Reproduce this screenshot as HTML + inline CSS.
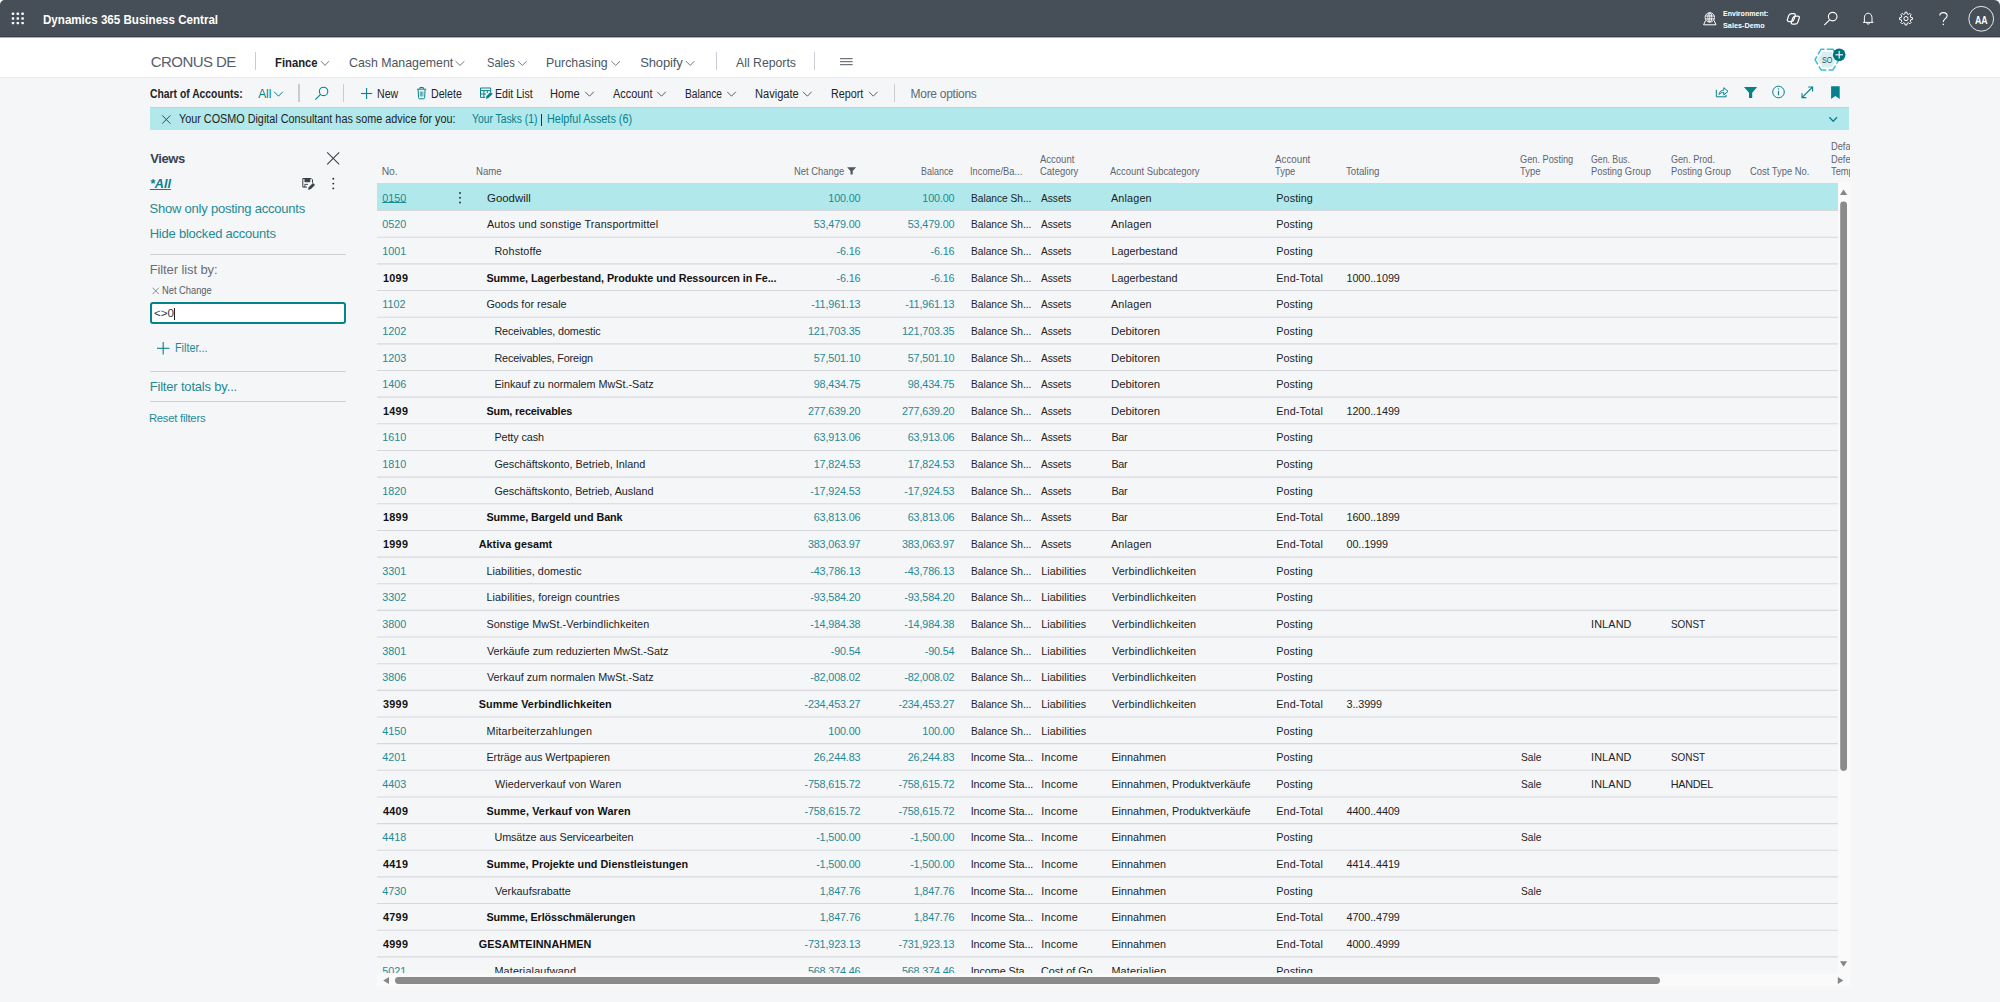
<!DOCTYPE html>
<html><head><meta charset="utf-8"><title>Chart of Accounts</title>
<style>
html,body{margin:0;padding:0;}
body{width:2000px;height:1002px;overflow:hidden;background:#f5f6f8;font-family:"Liberation Sans", sans-serif;position:relative;color:#212326;}
.t{position:absolute;white-space:pre;line-height:20px;height:20px;}
svg{overflow:visible;}
</style></head><body>
<div style="position:absolute;left:0px;top:0px;width:2000px;height:40px;background:#fff;"></div>
<div style="position:absolute;left:0px;top:0px;width:2000px;height:37.2px;background:#464e57;border-radius:5px 6px 0 0;box-shadow:0 0.3px 1px rgba(0,0,0,.35);"></div>
<div style="position:absolute;left:0px;top:35.9px;width:2000px;height:1.3px;background:#363f48;"></div>
<div style="position:absolute;left:0px;top:37.8px;width:2000px;height:39.2px;background:#fff;"></div>
<div style="position:absolute;left:0px;top:76.9px;width:2000px;height:1px;background:#ebecec;"></div>
<div style="position:absolute;left:150px;top:107.4px;width:1699.4px;height:0.9px;background:#c9ced2;"></div>
<div style="position:absolute;left:150px;top:108px;width:1699.4px;height:21.8px;background:#b0e8eb;"></div>
<svg style="position:absolute;left:0px;top:0px;" width="1" height="1" viewBox="0 0 1 1"><rect x="11.75" y="12.600000000000001" width="2.5" height="2.4" rx="0.7" fill="#fff"/><rect x="11.75" y="17.25" width="2.5" height="2.4" rx="0.7" fill="#fff"/><rect x="11.75" y="21.900000000000002" width="2.5" height="2.4" rx="0.7" fill="#fff"/><rect x="16.55" y="12.600000000000001" width="2.5" height="2.4" rx="0.7" fill="#fff"/><rect x="16.55" y="17.25" width="2.5" height="2.4" rx="0.7" fill="#fff"/><rect x="16.55" y="21.900000000000002" width="2.5" height="2.4" rx="0.7" fill="#fff"/><rect x="21.35" y="12.600000000000001" width="2.5" height="2.4" rx="0.7" fill="#fff"/><rect x="21.35" y="17.25" width="2.5" height="2.4" rx="0.7" fill="#fff"/><rect x="21.35" y="21.900000000000002" width="2.5" height="2.4" rx="0.7" fill="#fff"/></svg>
<svg style="position:absolute;left:0px;top:0px;" width="1" height="1" viewBox="0 0 1 1"><g fill="none" stroke="#fff" stroke-width="0.9"><circle cx="1709.8" cy="17.4" r="4.7"/><ellipse cx="1709.8" cy="17.4" rx="2" ry="4.7"/><path d="M1705.2 16h9.2M1705.2 18.9h9.2M1709.8 12.7v9.4"/><path d="M1705.6 20.4 L1703.6 24.8 H1716 L1714 20.4" stroke-width="1"/></g></svg>
<svg style="position:absolute;left:0px;top:0px;" width="1" height="1" viewBox="0 0 1 1"><g fill="none" stroke="#fff" stroke-width="1.25"><path d="M1788.64 15.60Q1789.30 13.50 1791.50 13.50L1793.60 13.50Q1795.80 13.50 1795.14 15.60L1793.96 19.40Q1793.30 21.50 1791.10 21.50L1789.00 21.50Q1786.80 21.50 1787.46 19.40Z"/><path d="M1792.70 18.19Q1793.40 16.10 1795.60 16.10L1797.70 16.10Q1799.90 16.10 1799.20 18.19L1797.90 22.11Q1797.20 24.20 1795.00 24.20L1792.90 24.20Q1790.70 24.20 1791.40 22.11Z"/></g></svg>
<svg style="position:absolute;left:0px;top:0px;" width="1" height="1" viewBox="0 0 1 1"><g fill="none" stroke="#fff" stroke-width="1.15"><circle cx="1832.7" cy="16.6" r="4.3"/><path d="M1829.6 19.8L1824.300 25.100"/></g></svg>
<svg style="position:absolute;left:0px;top:0px;" width="1" height="1" viewBox="0 0 1 1"><g fill="none" stroke="#fff" stroke-width="1"><path d="M1863 22.400h10.400M1864.400 22.400v-4.600c0-2.800 1.700-4.600 3.800-4.600s3.800 1.800 3.800 4.600v4.600"/><path d="M1866.900 22.900c0 .8.600 1.300 1.300 1.300s1.300-.5 1.300-1.300"/></g></svg>
<svg style="position:absolute;left:0px;top:0px;" width="1" height="1" viewBox="0 0 1 1"><g fill="none" stroke="#fff" stroke-width="1" stroke-linejoin="round"><polygon points="1910.77,17.50 1912.43,17.64 1912.43,19.56 1910.77,19.70 1910.16,21.20 1911.23,22.47 1909.87,23.83 1908.60,22.76 1907.10,23.37 1906.96,25.03 1905.04,25.03 1904.90,23.37 1903.40,22.76 1902.13,23.83 1900.77,22.47 1901.84,21.20 1901.23,19.70 1899.57,19.56 1899.57,17.64 1901.23,17.50 1901.84,16.00 1900.77,14.73 1902.13,13.37 1903.40,14.44 1904.90,13.83 1905.04,12.17 1906.96,12.17 1907.10,13.83 1908.60,14.44 1909.87,13.37 1911.23,14.73 1910.16,16.00"/><circle cx="1906.0" cy="18.6" r="2.1"/></g></svg>
<svg style="position:absolute;left:0px;top:0px;" width="1" height="1" viewBox="0 0 1 1"><g fill="none" stroke="#fff" stroke-width="1.1"><path d="M1939.800 15.600c0-1.900 1.600-3 3.600-3s3.700 1.200 3.700 3.100c0 1.700-1.100 2.500-2.300 3.400-1 .8-1.500 1.500-1.500 3"/></g><rect x="1942.700" y="23.700" width="1.300" height="1.400" fill="#fff"/></svg>
<svg style="position:absolute;left:0px;top:0px;" width="1" height="1" viewBox="0 0 1 1"><circle cx="1981.2" cy="18.8" r="12.4" fill="none" stroke="#e8eaec" stroke-width="1"/></svg>
<div style="position:absolute;left:254.8px;top:52px;width:1.2px;height:17.599999999999994px;background:#c9ccd3;"></div>
<svg style="position:absolute;left:0px;top:0px;" width="1" height="1" viewBox="0 0 1 1"><polyline points="321,61.2 325.0,65.4 329,61.2" fill="none" stroke="#6f7882" stroke-width="1.0"/></svg>
<svg style="position:absolute;left:0px;top:0px;" width="1" height="1" viewBox="0 0 1 1"><polyline points="455.6,61.2 460.0,65.4 464.4,61.2" fill="none" stroke="#6f7882" stroke-width="1.0"/></svg>
<svg style="position:absolute;left:0px;top:0px;" width="1" height="1" viewBox="0 0 1 1"><polyline points="518,61.2 522.3,65.4 526.6,61.2" fill="none" stroke="#6f7882" stroke-width="1.0"/></svg>
<svg style="position:absolute;left:0px;top:0px;" width="1" height="1" viewBox="0 0 1 1"><polyline points="611.4,61.2 615.7,65.4 620,61.2" fill="none" stroke="#6f7882" stroke-width="1.0"/></svg>
<svg style="position:absolute;left:0px;top:0px;" width="1" height="1" viewBox="0 0 1 1"><polyline points="686,61.2 690.2,65.4 694.4,61.2" fill="none" stroke="#6f7882" stroke-width="1.0"/></svg>
<div style="position:absolute;left:715.8px;top:52px;width:1.2px;height:17.599999999999994px;background:#c9ccd3;"></div>
<div style="position:absolute;left:813.8px;top:52px;width:1.2px;height:17.599999999999994px;background:#c9ccd3;"></div>
<svg style="position:absolute;left:0px;top:0px;" width="1" height="1" viewBox="0 0 1 1"><line x1="840" y1="58.7" x2="852.6" y2="58.7" stroke="#4c5660" stroke-width="1" stroke-linecap="butt"/><line x1="840" y1="61.7" x2="852.6" y2="61.7" stroke="#4c5660" stroke-width="1" stroke-linecap="butt"/><line x1="840" y1="64.7" x2="852.6" y2="64.7" stroke="#4c5660" stroke-width="1" stroke-linecap="butt"/></svg>
<svg style="position:absolute;left:0px;top:0px;" width="1" height="1" viewBox="0 0 1 1"><polygon points="1835.10,59.60 1831.05,66.61 1822.95,66.61 1818.90,59.60 1822.95,52.59 1831.05,52.59" fill="#d8eef1" stroke="#d8eef1" stroke-width="1.6" stroke-linejoin="round"/><polygon points="1839.00,59.60 1833.00,69.99 1821.00,69.99 1815.00,59.60 1821.00,49.21 1833.00,49.21" fill="none" stroke="#38c0ce" stroke-width="1.5" stroke-dasharray="8.3 3.4" stroke-dashoffset="4.15" stroke-linejoin="round" stroke-linecap="round"/><circle cx="1839.2" cy="54.8" r="6.3" fill="#00727c"/><line x1="1835.5" y1="54.8" x2="1842.9" y2="54.8" stroke="#fff" stroke-width="1.1" stroke-linecap="butt"/><line x1="1839.2" y1="51.1" x2="1839.2" y2="58.5" stroke="#fff" stroke-width="1.1" stroke-linecap="butt"/></svg>
<svg style="position:absolute;left:0px;top:0px;" width="1" height="1" viewBox="0 0 1 1"><polyline points="274.2,91.8 278.5,96.2 282.8,91.8" fill="none" stroke="#06828c" stroke-width="1.0"/></svg>
<div style="position:absolute;left:298.4px;top:84.4px;width:1.2px;height:17.19999999999999px;background:#c9ccd3;"></div>
<svg style="position:absolute;left:0px;top:0px;" width="1" height="1" viewBox="0 0 1 1"><g fill="none" stroke="#06828c" stroke-width="1.1"><circle cx="323.6" cy="91.400" r="4.200"/><path d="M320.600 94.400L315.300 99.700"/></g></svg>
<div style="position:absolute;left:343.0px;top:84.4px;width:1.2px;height:17.19999999999999px;background:#c9ccd3;"></div>
<svg style="position:absolute;left:0px;top:0px;" width="1" height="1" viewBox="0 0 1 1"><line x1="361" y1="93.5" x2="372.2" y2="93.5" stroke="#06828c" stroke-width="1.1" stroke-linecap="butt"/><line x1="366.6" y1="87.9" x2="366.6" y2="99.1" stroke="#06828c" stroke-width="1.1" stroke-linecap="butt"/></svg>
<svg style="position:absolute;left:0px;top:0px;" width="1" height="1" viewBox="0 0 1 1"><g fill="none" stroke="#06828c" stroke-width="1"><path d="M417 89.200h9.200M419.900 89v-1.500h3.400v1.500M418.100 89.400l.5 8.300c0 .7.400 1.100 1.100 1.100h3.800c.7 0 1.100-.4 1.100-1.100l.5-8.300"/><path d="M420.300 91.500v5M421.600 91.500v5M422.900 91.500v5" stroke-width="0.7"/></g></svg>
<svg style="position:absolute;left:0px;top:0px;" width="1" height="1" viewBox="0 0 1 1"><g fill="none" stroke="#06828c" stroke-width="1"><path d="M480.500 88h10.200v2.600h-10.200zM480.500 90.600v6.800h4.600M483.900 90.600v6.800M487.300 90.600v2.500M480.500 94h5.500M490.700 90.600v1.500"/><path d="M486.200 98.400l.6-2.400 3.800-3.800 1.700 1.700-3.800 3.800z" fill="#06828c" stroke-width="0.6"/></g></svg>
<svg style="position:absolute;left:0px;top:0px;" width="1" height="1" viewBox="0 0 1 1"><polyline points="585.2,91.8 589.5,96.2 593.8,91.8" fill="none" stroke="#5a636d" stroke-width="1.0"/></svg>
<svg style="position:absolute;left:0px;top:0px;" width="1" height="1" viewBox="0 0 1 1"><polyline points="657.2,91.8 661.5,96.2 665.8,91.8" fill="none" stroke="#5a636d" stroke-width="1.0"/></svg>
<svg style="position:absolute;left:0px;top:0px;" width="1" height="1" viewBox="0 0 1 1"><polyline points="727.2,91.8 731.5,96.2 735.8,91.8" fill="none" stroke="#5a636d" stroke-width="1.0"/></svg>
<svg style="position:absolute;left:0px;top:0px;" width="1" height="1" viewBox="0 0 1 1"><polyline points="803,91.8 807.3,96.2 811.6,91.8" fill="none" stroke="#5a636d" stroke-width="1.0"/></svg>
<svg style="position:absolute;left:0px;top:0px;" width="1" height="1" viewBox="0 0 1 1"><polyline points="869,91.8 873.3,96.2 877.6,91.8" fill="none" stroke="#5a636d" stroke-width="1.0"/></svg>
<div style="position:absolute;left:894.3px;top:84.4px;width:1.2px;height:17.19999999999999px;background:#c9ccd3;"></div>
<svg style="position:absolute;left:0px;top:0px;" width="1" height="1" viewBox="0 0 1 1"><g fill="none" stroke="#06828c" stroke-width="1"><path d="M1716.300 89.800v7h9.800v-2"/><path d="M1719 94.600c.3-2.600 2-4.300 4.800-4.500v-2.400l4.200 3.600-4.200 3.600v-2.500c-2.100 0-3.600.6-4.800 2.200z"/></g></svg>
<svg style="position:absolute;left:0px;top:0px;" width="1" height="1" viewBox="0 0 1 1"><path d="M1744 86.900h13.200l-5 5.900v5.200h-3.200v-5.200z" fill="#06828c"/></svg>
<svg style="position:absolute;left:0px;top:0px;" width="1" height="1" viewBox="0 0 1 1"><circle cx="1778.500" cy="92" r="5.800" fill="none" stroke="#06828c" stroke-width="1"/><line x1="1778.5" y1="90.8" x2="1778.5" y2="95.2" stroke="#06828c" stroke-width="1.1" stroke-linecap="butt"/><circle cx="1778.500" cy="88.900" r="0.700" fill="#06828c"/></svg>
<svg style="position:absolute;left:0px;top:0px;" width="1" height="1" viewBox="0 0 1 1"><g fill="none" stroke="#06828c" stroke-width="1.1"><path d="M1802 97.600L1812.600 87M1808.200 87h4.400v4.400M1802 93.200v4.400h4.400"/></g></svg>
<svg style="position:absolute;left:0px;top:0px;" width="1" height="1" viewBox="0 0 1 1"><path d="M1831.100 86.200h8.600v12.900l-4.300-3-4.300 3z" fill="#06828c"/></svg>
<svg style="position:absolute;left:0px;top:0px;" width="1" height="1" viewBox="0 0 1 1"><line x1="162.2" y1="115.4" x2="170.4" y2="123.6" stroke="#3b4450" stroke-width="1" stroke-linecap="butt"/><line x1="170.4" y1="115.4" x2="162.2" y2="123.6" stroke="#3b4450" stroke-width="1" stroke-linecap="butt"/></svg>
<div style="position:absolute;left:540.6px;top:114.2px;width:1.1px;height:11.6px;background:#2a2e33;"></div>
<svg style="position:absolute;left:0px;top:0px;" width="1" height="1" viewBox="0 0 1 1"><polyline points="1829.4,117.2 1833.2,121.3 1837,117.2" fill="none" stroke="#06828c" stroke-width="1.3"/></svg>
<svg style="position:absolute;left:0px;top:0px;" width="1" height="1" viewBox="0 0 1 1"><line x1="327.2" y1="152.4" x2="339.2" y2="164.4" stroke="#39424e" stroke-width="1.1" stroke-linecap="butt"/><line x1="339.2" y1="152.4" x2="327.2" y2="164.4" stroke="#39424e" stroke-width="1.1" stroke-linecap="butt"/></svg>
<svg style="position:absolute;left:0px;top:0px;" width="1" height="1" viewBox="0 0 1 1"><g fill="none" stroke="#3a3f45" stroke-width="1"><path d="M302.800 178.500h8.400l1.300 1.300v3M302.800 178.500v8.600h4.200"/><path d="M304.800 178.700v3.200h5.200v-3.200" fill="#3a3f45" stroke-width="0.6"/><path d="M304.800 187v-2.600h3.200" stroke-width="0.9"/><path d="M308.400 189.500l.6-2.300 4-4 1.700 1.700-4 4z" fill="#3a3f45" stroke-width="0.5"/></g></svg>
<svg style="position:absolute;left:0px;top:0px;" width="1" height="1" viewBox="0 0 1 1"><circle cx="333.3" cy="178.8" r="0.95" fill="#2a2e33"/><circle cx="333.3" cy="183.6" r="0.95" fill="#2a2e33"/><circle cx="333.3" cy="188.4" r="0.95" fill="#2a2e33"/></svg>
<div style="position:absolute;left:150px;top:253.6px;width:196px;height:1px;background:#cdd0d3;"></div>
<svg style="position:absolute;left:0px;top:0px;" width="1" height="1" viewBox="0 0 1 1"><line x1="152.5" y1="287.7" x2="158.9" y2="294.1" stroke="#6a737c" stroke-width="0.8" stroke-linecap="butt"/><line x1="158.9" y1="287.7" x2="152.5" y2="294.1" stroke="#6a737c" stroke-width="0.8" stroke-linecap="butt"/></svg>
<div style="position:absolute;left:150px;top:302px;width:196px;height:22.4px;box-sizing:border-box;border:2px solid #06828c;border-radius:3px;background:#fff"></div>
<div style="position:absolute;left:174.2px;top:308.2px;width:1px;height:11.6px;background:#222;"></div>
<svg style="position:absolute;left:0px;top:0px;" width="1" height="1" viewBox="0 0 1 1"><line x1="157" y1="348.3" x2="169.4" y2="348.3" stroke="#06828c" stroke-width="1.1" stroke-linecap="butt"/><line x1="163.2" y1="342.1" x2="163.2" y2="354.5" stroke="#06828c" stroke-width="1.1" stroke-linecap="butt"/></svg>
<div style="position:absolute;left:150px;top:371.2px;width:196px;height:1px;background:#cdd0d3;"></div>
<div style="position:absolute;left:150px;top:401.4px;width:196px;height:1px;background:#cdd0d3;"></div>
<svg style="position:absolute;left:0px;top:0px;" width="1" height="1" viewBox="0 0 1 1"><path d="M847.100 167.200h9l-3.400 3.800v3.600h-2.200v-3.600z" fill="#50575f"/></svg>
<svg style="position:absolute;left:0px;top:0px;" width="1" height="1" viewBox="0 0 1 1"><rect x="377" y="183.45" width="1461" height="26.9" fill="#b0e8eb"/></svg>
<svg style="position:absolute;left:0px;top:0px;" width="1" height="1" viewBox="0 0 1 1"><line x1="377" x2="1838" y1="183.50" y2="183.50" stroke="#d6d8dc" stroke-width="1.1"/><line x1="377" x2="1838" y1="210.55" y2="210.55" stroke="#d6d8dc" stroke-width="1.1"/><line x1="377" x2="1838" y1="237.25" y2="237.25" stroke="#d6d8dc" stroke-width="1.1"/><line x1="377" x2="1838" y1="263.91" y2="263.91" stroke="#d6d8dc" stroke-width="1.1"/><line x1="377" x2="1838" y1="290.56" y2="290.56" stroke="#d6d8dc" stroke-width="1.1"/><line x1="377" x2="1838" y1="317.21" y2="317.21" stroke="#d6d8dc" stroke-width="1.1"/><line x1="377" x2="1838" y1="343.86" y2="343.86" stroke="#d6d8dc" stroke-width="1.1"/><line x1="377" x2="1838" y1="370.51" y2="370.51" stroke="#d6d8dc" stroke-width="1.1"/><line x1="377" x2="1838" y1="397.17" y2="397.17" stroke="#d6d8dc" stroke-width="1.1"/><line x1="377" x2="1838" y1="423.82" y2="423.82" stroke="#d6d8dc" stroke-width="1.1"/><line x1="377" x2="1838" y1="450.47" y2="450.47" stroke="#d6d8dc" stroke-width="1.1"/><line x1="377" x2="1838" y1="477.12" y2="477.12" stroke="#d6d8dc" stroke-width="1.1"/><line x1="377" x2="1838" y1="503.77" y2="503.77" stroke="#d6d8dc" stroke-width="1.1"/><line x1="377" x2="1838" y1="530.43" y2="530.43" stroke="#d6d8dc" stroke-width="1.1"/><line x1="377" x2="1838" y1="557.08" y2="557.08" stroke="#d6d8dc" stroke-width="1.1"/><line x1="377" x2="1838" y1="583.73" y2="583.73" stroke="#d6d8dc" stroke-width="1.1"/><line x1="377" x2="1838" y1="610.38" y2="610.38" stroke="#d6d8dc" stroke-width="1.1"/><line x1="377" x2="1838" y1="637.03" y2="637.03" stroke="#d6d8dc" stroke-width="1.1"/><line x1="377" x2="1838" y1="663.69" y2="663.69" stroke="#d6d8dc" stroke-width="1.1"/><line x1="377" x2="1838" y1="690.34" y2="690.34" stroke="#d6d8dc" stroke-width="1.1"/><line x1="377" x2="1838" y1="716.99" y2="716.99" stroke="#d6d8dc" stroke-width="1.1"/><line x1="377" x2="1838" y1="743.64" y2="743.64" stroke="#d6d8dc" stroke-width="1.1"/><line x1="377" x2="1838" y1="770.29" y2="770.29" stroke="#d6d8dc" stroke-width="1.1"/><line x1="377" x2="1838" y1="796.95" y2="796.95" stroke="#d6d8dc" stroke-width="1.1"/><line x1="377" x2="1838" y1="823.60" y2="823.60" stroke="#d6d8dc" stroke-width="1.1"/><line x1="377" x2="1838" y1="850.25" y2="850.25" stroke="#d6d8dc" stroke-width="1.1"/><line x1="377" x2="1838" y1="876.90" y2="876.90" stroke="#d6d8dc" stroke-width="1.1"/><line x1="377" x2="1838" y1="903.55" y2="903.55" stroke="#d6d8dc" stroke-width="1.1"/><line x1="377" x2="1838" y1="930.21" y2="930.21" stroke="#d6d8dc" stroke-width="1.1"/><line x1="377" x2="1838" y1="956.86" y2="956.86" stroke="#d6d8dc" stroke-width="1.1"/></svg>
<svg style="position:absolute;left:0px;top:0px;" width="1" height="1" viewBox="0 0 1 1"><circle cx="460" cy="193.0" r="0.95" fill="#2a2e33"/><circle cx="460" cy="197.7" r="0.95" fill="#2a2e33"/><circle cx="460" cy="202.5" r="0.95" fill="#2a2e33"/></svg>
<span class="t" style="top:10px;font-size:13.4px;font-weight:700;color:#fff;transform:translateY(-0.45px) scaleX(0.8648);transform-origin:0 50%;left:42.86px;">Dynamics 365 Business Central</span>
<span class="t" style="top:4px;font-size:8.0px;font-weight:700;color:#fff;transform:translateY(0px) scaleX(0.8801);transform-origin:0 50%;left:1722.86px;">Environment:</span>
<span class="t" style="top:16px;font-size:8.0px;font-weight:700;color:#fff;transform:translateY(0px) scaleX(0.9102);transform-origin:0 50%;left:1722.86px;">Sales-Demo</span>
<span class="t" style="top:11px;font-size:10px;font-weight:700;color:#fff;transform:translateY(0px) scaleX(0.8766);transform-origin:0 50%;left:1974.75px;">AA</span>
<span class="t" style="top:52px;font-size:15px;color:#55606b;letter-spacing:-0.543px;left:150.68px;">CRONUS DE</span>
<span class="t" style="top:53px;font-size:13px;font-weight:700;transform:translateY(0px) scaleX(0.8669);transform-origin:0 50%;left:274.79px;">Finance</span>
<span class="t" style="top:53px;font-size:13px;color:#4c5660;transform:translateY(0px) scaleX(0.9491);transform-origin:0 50%;left:348.79px;">Cash Management</span>
<span class="t" style="top:53px;font-size:13px;color:#4c5660;transform:translateY(0px) scaleX(0.8553);transform-origin:0 50%;left:486.79px;">Sales</span>
<span class="t" style="top:53px;font-size:13px;color:#4c5660;transform:translateY(0px) scaleX(0.9468);transform-origin:0 50%;left:546.47px;">Purchasing</span>
<span class="t" style="top:53px;font-size:13px;color:#4c5660;letter-spacing:-0.155px;left:640.28px;">Shopify</span>
<span class="t" style="top:53px;font-size:13px;color:#4c5660;transform:translateY(0px) scaleX(0.9434);transform-origin:0 50%;left:735.88px;">All Reports</span>
<span class="t" style="top:50px;font-size:8.6px;color:#27525d;transform:translateY(0px) scaleX(0.8409);transform-origin:0 50%;left:1822.03px;">SO</span>
<span class="t" style="top:84px;font-size:12px;font-weight:700;transform:translateY(0px) scaleX(0.8620);transform-origin:0 50%;left:149.54px;">Chart of Accounts:</span>
<span class="t" style="top:84px;font-size:12px;color:#06828c;letter-spacing:-0.109px;left:258.19px;">All</span>
<span class="t" style="top:84px;font-size:12px;transform:translateY(0px) scaleX(0.8827);transform-origin:0 50%;left:376.54px;">New</span>
<span class="t" style="top:84px;font-size:12px;transform:translateY(0px) scaleX(0.8880);transform-origin:0 50%;left:431.14px;">Delete</span>
<span class="t" style="top:84px;font-size:12px;transform:translateY(0px) scaleX(0.8824);transform-origin:0 50%;left:495.14px;">Edit List</span>
<span class="t" style="top:84px;font-size:12px;transform:translateY(0px) scaleX(0.9262);transform-origin:0 50%;left:550.14px;">Home</span>
<span class="t" style="top:84px;font-size:12px;transform:translateY(0px) scaleX(0.9091);transform-origin:0 50%;left:613.12px;">Account</span>
<span class="t" style="top:84px;font-size:12px;transform:translateY(0px) scaleX(0.8531);transform-origin:0 50%;left:685.14px;">Balance</span>
<span class="t" style="top:84px;font-size:12px;transform:translateY(0px) scaleX(0.9224);transform-origin:0 50%;left:755.14px;">Navigate</span>
<span class="t" style="top:84px;font-size:12px;transform:translateY(0px) scaleX(0.8975);transform-origin:0 50%;left:831.14px;">Report</span>
<span class="t" style="top:84px;font-size:12px;color:#5f6974;letter-spacing:-0.278px;left:910.54px;">More options</span>
<span class="t" style="top:109px;font-size:12px;transform:translateY(0px) scaleX(0.9006);transform-origin:0 50%;left:178.54px;">Your COSMO Digital Consultant has some advice for you:</span>
<span class="t" style="top:109px;font-size:12px;color:#06828c;transform:translateY(0px) scaleX(0.8597);transform-origin:0 50%;left:471.54px;">Your Tasks (1)</span>
<span class="t" style="top:109px;font-size:12px;color:#06828c;transform:translateY(0px) scaleX(0.9049);transform-origin:0 50%;left:547.40px;">Helpful Assets (6)</span>
<span class="t" style="top:149px;font-size:13px;font-weight:700;color:#39424e;letter-spacing:-0.442px;left:150.37px;">Views</span>
<span class="t" style="top:174px;font-size:12.6px;font-weight:700;color:#06828c;font-style:italic;letter-spacing:0.009px;left:149.91px;text-decoration:underline;text-decoration-thickness:1.2px;text-underline-offset:1.3px;text-decoration-skip-ink:none;">*All</span>
<span class="t" style="top:199px;font-size:13px;color:#1f8a94;letter-spacing:-0.217px;left:149.48px;">Show only posting accounts</span>
<span class="t" style="top:224px;font-size:13px;color:#1f8a94;letter-spacing:-0.224px;left:149.69px;">Hide blocked accounts</span>
<span class="t" style="top:260px;font-size:13px;color:#66707a;letter-spacing:-0.105px;left:149.69px;">Filter list by:</span>
<span class="t" style="top:281px;font-size:10.2px;color:#555e67;transform:translateY(0px) scaleX(0.9136);transform-origin:0 50%;left:162.34px;">Net Change</span>
<span class="t" style="top:303px;font-size:11.6px;color:#33383d;letter-spacing:-0.05px;left:154.06px;">&lt;&gt;0</span>
<span class="t" style="top:338px;font-size:12px;color:#1f8a94;transform:translateY(0px) scaleX(0.9025);transform-origin:0 50%;left:175.38px;">Filter...</span>
<span class="t" style="top:377px;font-size:13px;color:#1f8a94;letter-spacing:-0.183px;left:149.69px;">Filter totals by...</span>
<span class="t" style="top:408px;font-size:11.3px;color:#1f8a94;letter-spacing:-0.248px;left:148.89px;">Reset filters</span>
<span class="t" style="top:162px;font-size:10.3px;color:#5c6670;letter-spacing:-0.028px;left:381.63px;">No.</span>
<span class="t" style="top:162px;font-size:10.3px;color:#5c6670;transform:translateY(0px) scaleX(0.9313);transform-origin:0 50%;left:475.63px;">Name</span>
<span class="t" style="top:162px;font-size:10.3px;color:#5c6670;transform:translateY(0px) scaleX(0.9120);transform-origin:0 50%;left:794.03px;">Net Change</span>
<span class="t" style="top:162px;font-size:10.3px;color:#5c6670;transform:translateY(0px) scaleX(0.8687);transform-origin:0 50%;left:920.63px;">Balance</span>
<span class="t" style="top:162px;font-size:10.3px;color:#5c6670;transform:translateY(0px) scaleX(0.9038);transform-origin:0 50%;left:969.63px;">Income/Ba...</span>
<span class="t" style="top:150px;font-size:10.3px;color:#5c6670;transform:translateY(0px) scaleX(0.9228);transform-origin:0 50%;left:1040.03px;">Account</span>
<span class="t" style="top:162px;font-size:10.3px;color:#5c6670;transform:translateY(0px) scaleX(0.9175);transform-origin:0 50%;left:1040.23px;">Category</span>
<span class="t" style="top:162px;font-size:10.3px;color:#5c6670;transform:translateY(0px) scaleX(0.9144);transform-origin:0 50%;left:1110.23px;">Account Subcategory</span>
<span class="t" style="top:150px;font-size:10.3px;color:#5c6670;transform:translateY(0px) scaleX(0.9493);transform-origin:0 50%;left:1275.23px;">Account</span>
<span class="t" style="top:162px;font-size:10.3px;color:#5c6670;transform:translateY(0px) scaleX(0.9113);transform-origin:0 50%;left:1275.03px;">Type</span>
<span class="t" style="top:162px;font-size:10.3px;color:#5c6670;transform:translateY(0px) scaleX(0.9418);transform-origin:0 50%;left:1345.93px;">Totaling</span>
<span class="t" style="top:150px;font-size:10.3px;color:#5c6670;transform:translateY(0px) scaleX(0.8942);transform-origin:0 50%;left:1519.63px;">Gen. Posting</span>
<span class="t" style="top:162px;font-size:10.3px;color:#5c6670;transform:translateY(0px) scaleX(0.9241);transform-origin:0 50%;left:1520.01px;">Type</span>
<span class="t" style="top:150px;font-size:10.3px;color:#5c6670;transform:translateY(0px) scaleX(0.8483);transform-origin:0 50%;left:1590.63px;">Gen. Bus.</span>
<span class="t" style="top:162px;font-size:10.3px;color:#5c6670;transform:translateY(0px) scaleX(0.9104);transform-origin:0 50%;left:1590.63px;">Posting Group</span>
<span class="t" style="top:150px;font-size:10.3px;color:#5c6670;transform:translateY(0px) scaleX(0.8823);transform-origin:0 50%;left:1670.63px;">Gen. Prod.</span>
<span class="t" style="top:162px;font-size:10.3px;color:#5c6670;transform:translateY(0px) scaleX(0.9104);transform-origin:0 50%;left:1670.63px;">Posting Group</span>
<span class="t" style="top:162px;font-size:10.3px;color:#5c6670;transform:translateY(0px) scaleX(0.9119);transform-origin:0 50%;left:1750.23px;">Cost Type No.</span>
<span class="t" style="top:137px;font-size:10.3px;color:#5c6670;left:1830.83px;transform:scaleX(0.9);transform-origin:0 50%;width:20.9px;overflow:hidden;">Default</span>
<span class="t" style="top:150px;font-size:10.3px;color:#5c6670;left:1830.83px;transform:scaleX(0.9);transform-origin:0 50%;width:20.9px;overflow:hidden;">Deferral</span>
<span class="t" style="top:162px;font-size:10.3px;color:#5c6670;left:1830.83px;transform:scaleX(0.9);transform-origin:0 50%;width:20.9px;overflow:hidden;">Template</span>
<span class="t" style="top:188px;font-size:10.8px;color:#1f8a94;letter-spacing:0.0px;left:382.21px;text-decoration:underline;text-decoration-thickness:0.9px;text-underline-offset:0.4px;text-decoration-skip-ink:none;">0150</span>
<span class="t" style="top:188px;font-size:10.8px;transform:translateY(0px) scaleX(1.0575);transform-origin:0 50%;left:487.03px;">Goodwill</span>
<span class="t" style="top:188px;font-size:10.8px;color:#1f8a94;left:828.31px;letter-spacing:-0.16px;">100.00</span>
<span class="t" style="top:188px;font-size:10.8px;color:#1f8a94;left:922.31px;letter-spacing:-0.16px;">100.00</span>
<span class="t" style="top:188px;font-size:10.8px;transform:translateY(0px) scaleX(0.9401);transform-origin:0 50%;left:970.71px;">Balance Sh...</span>
<span class="t" style="top:188px;font-size:10.8px;transform:translateY(0px) scaleX(0.9376);transform-origin:0 50%;left:1040.92px;">Assets</span>
<span class="t" style="top:188px;font-size:10.8px;letter-spacing:0.161px;left:1111.01px;">Anlagen</span>
<span class="t" style="top:188px;font-size:10.8px;letter-spacing:0.109px;left:1276.21px;">Posting</span>
<span class="t" style="top:214px;font-size:10.8px;color:#1f8a94;letter-spacing:0.0px;left:382.21px;">0520</span>
<span class="t" style="top:214px;font-size:10.8px;letter-spacing:0.150px;left:486.96px;">Autos und sonstige Transportmittel</span>
<span class="t" style="top:214px;font-size:10.8px;color:#1f8a94;left:813.77px;letter-spacing:-0.16px;">53,479.00</span>
<span class="t" style="top:214px;font-size:10.8px;color:#1f8a94;left:907.77px;letter-spacing:-0.16px;">53,479.00</span>
<span class="t" style="top:214px;font-size:10.8px;transform:translateY(0px) scaleX(0.9401);transform-origin:0 50%;left:970.71px;">Balance Sh...</span>
<span class="t" style="top:214px;font-size:10.8px;transform:translateY(0px) scaleX(0.9373);transform-origin:0 50%;left:1040.90px;">Assets</span>
<span class="t" style="top:214px;font-size:10.8px;letter-spacing:0.161px;left:1111.01px;">Anlagen</span>
<span class="t" style="top:214px;font-size:10.8px;letter-spacing:0.093px;left:1276.21px;">Posting</span>
<span class="t" style="top:241px;font-size:10.8px;color:#1f8a94;letter-spacing:0.0px;left:382.21px;">1001</span>
<span class="t" style="top:241px;font-size:10.8px;letter-spacing:0.145px;left:494.41px;">Rohstoffe</span>
<span class="t" style="top:241px;font-size:10.8px;color:#1f8a94;left:836.57px;letter-spacing:-0.16px;">-6.16</span>
<span class="t" style="top:241px;font-size:10.8px;color:#1f8a94;left:930.57px;letter-spacing:-0.16px;">-6.16</span>
<span class="t" style="top:241px;font-size:10.8px;transform:translateY(0px) scaleX(0.9401);transform-origin:0 50%;left:970.71px;">Balance Sh...</span>
<span class="t" style="top:241px;font-size:10.8px;transform:translateY(0px) scaleX(0.9373);transform-origin:0 50%;left:1040.90px;">Assets</span>
<span class="t" style="top:241px;font-size:10.8px;letter-spacing:-0.005px;left:1111.41px;">Lagerbestand</span>
<span class="t" style="top:241px;font-size:10.8px;letter-spacing:0.093px;left:1276.21px;">Posting</span>
<span class="t" style="top:268px;font-size:10.8px;font-weight:700;color:#111;letter-spacing:0.33px;left:382.91px;">1099</span>
<span class="t" style="top:268px;font-size:10.8px;font-weight:700;color:#111;letter-spacing:-0.062px;left:486.41px;">Summe, Lagerbestand, Produkte und Ressourcen in Fe...</span>
<span class="t" style="top:268px;font-size:10.8px;color:#1f8a94;left:836.57px;letter-spacing:-0.16px;">-6.16</span>
<span class="t" style="top:268px;font-size:10.8px;color:#1f8a94;left:930.57px;letter-spacing:-0.16px;">-6.16</span>
<span class="t" style="top:268px;font-size:10.8px;transform:translateY(0px) scaleX(0.9401);transform-origin:0 50%;left:970.71px;">Balance Sh...</span>
<span class="t" style="top:268px;font-size:10.8px;transform:translateY(0px) scaleX(0.9373);transform-origin:0 50%;left:1040.90px;">Assets</span>
<span class="t" style="top:268px;font-size:10.8px;letter-spacing:-0.005px;left:1111.41px;">Lagerbestand</span>
<span class="t" style="top:268px;font-size:10.8px;letter-spacing:0.131px;left:1276.21px;">End-Total</span>
<span class="t" style="top:268px;font-size:10.8px;letter-spacing:-0.08px;left:1346.51px;">1000..1099</span>
<span class="t" style="top:294px;font-size:10.8px;color:#1f8a94;letter-spacing:0.0px;left:382.21px;">1102</span>
<span class="t" style="top:294px;font-size:10.8px;letter-spacing:0.024px;left:486.41px;">Goods for resale</span>
<span class="t" style="top:294px;font-size:10.8px;color:#1f8a94;left:811.15px;letter-spacing:-0.16px;">-11,961.13</span>
<span class="t" style="top:294px;font-size:10.8px;color:#1f8a94;left:905.15px;letter-spacing:-0.16px;">-11,961.13</span>
<span class="t" style="top:294px;font-size:10.8px;transform:translateY(0px) scaleX(0.9401);transform-origin:0 50%;left:970.71px;">Balance Sh...</span>
<span class="t" style="top:294px;font-size:10.8px;transform:translateY(0px) scaleX(0.9373);transform-origin:0 50%;left:1040.90px;">Assets</span>
<span class="t" style="top:294px;font-size:10.8px;letter-spacing:0.161px;left:1111.01px;">Anlagen</span>
<span class="t" style="top:294px;font-size:10.8px;letter-spacing:0.093px;left:1276.21px;">Posting</span>
<span class="t" style="top:321px;font-size:10.8px;color:#1f8a94;letter-spacing:0.0px;left:382.21px;">1202</span>
<span class="t" style="top:321px;font-size:10.8px;letter-spacing:-0.092px;left:494.41px;">Receivables, domestic</span>
<span class="t" style="top:321px;font-size:10.8px;color:#1f8a94;left:807.93px;letter-spacing:-0.16px;">121,703.35</span>
<span class="t" style="top:321px;font-size:10.8px;color:#1f8a94;left:901.93px;letter-spacing:-0.16px;">121,703.35</span>
<span class="t" style="top:321px;font-size:10.8px;transform:translateY(0px) scaleX(0.9401);transform-origin:0 50%;left:970.71px;">Balance Sh...</span>
<span class="t" style="top:321px;font-size:10.8px;transform:translateY(0px) scaleX(0.9373);transform-origin:0 50%;left:1040.90px;">Assets</span>
<span class="t" style="top:321px;font-size:10.8px;transform:translateY(0px) scaleX(1.0504);transform-origin:0 50%;left:1111.41px;">Debitoren</span>
<span class="t" style="top:321px;font-size:10.8px;letter-spacing:0.093px;left:1276.21px;">Posting</span>
<span class="t" style="top:348px;font-size:10.8px;color:#1f8a94;letter-spacing:0.0px;left:382.21px;">1203</span>
<span class="t" style="top:348px;font-size:10.8px;letter-spacing:-0.149px;left:494.41px;">Receivables, Foreign</span>
<span class="t" style="top:348px;font-size:10.8px;color:#1f8a94;left:813.77px;letter-spacing:-0.16px;">57,501.10</span>
<span class="t" style="top:348px;font-size:10.8px;color:#1f8a94;left:907.77px;letter-spacing:-0.16px;">57,501.10</span>
<span class="t" style="top:348px;font-size:10.8px;transform:translateY(0px) scaleX(0.9401);transform-origin:0 50%;left:970.71px;">Balance Sh...</span>
<span class="t" style="top:348px;font-size:10.8px;transform:translateY(0px) scaleX(0.9373);transform-origin:0 50%;left:1040.90px;">Assets</span>
<span class="t" style="top:348px;font-size:10.8px;transform:translateY(0px) scaleX(1.0504);transform-origin:0 50%;left:1111.41px;">Debitoren</span>
<span class="t" style="top:348px;font-size:10.8px;letter-spacing:0.093px;left:1276.21px;">Posting</span>
<span class="t" style="top:374px;font-size:10.8px;color:#1f8a94;letter-spacing:0.0px;left:382.21px;">1406</span>
<span class="t" style="top:374px;font-size:10.8px;letter-spacing:-0.015px;left:494.41px;">Einkauf zu normalem MwSt.-Satz</span>
<span class="t" style="top:374px;font-size:10.8px;color:#1f8a94;left:813.77px;letter-spacing:-0.16px;">98,434.75</span>
<span class="t" style="top:374px;font-size:10.8px;color:#1f8a94;left:907.77px;letter-spacing:-0.16px;">98,434.75</span>
<span class="t" style="top:374px;font-size:10.8px;transform:translateY(0px) scaleX(0.9401);transform-origin:0 50%;left:970.71px;">Balance Sh...</span>
<span class="t" style="top:374px;font-size:10.8px;transform:translateY(0px) scaleX(0.9373);transform-origin:0 50%;left:1040.90px;">Assets</span>
<span class="t" style="top:374px;font-size:10.8px;transform:translateY(0px) scaleX(1.0504);transform-origin:0 50%;left:1111.41px;">Debitoren</span>
<span class="t" style="top:374px;font-size:10.8px;letter-spacing:0.093px;left:1276.21px;">Posting</span>
<span class="t" style="top:401px;font-size:10.8px;font-weight:700;color:#111;letter-spacing:0.33px;left:382.91px;">1499</span>
<span class="t" style="top:401px;font-size:10.8px;font-weight:700;color:#111;letter-spacing:-0.158px;left:486.41px;">Sum, receivables</span>
<span class="t" style="top:401px;font-size:10.8px;color:#1f8a94;left:807.93px;letter-spacing:-0.16px;">277,639.20</span>
<span class="t" style="top:401px;font-size:10.8px;color:#1f8a94;left:901.93px;letter-spacing:-0.16px;">277,639.20</span>
<span class="t" style="top:401px;font-size:10.8px;transform:translateY(0px) scaleX(0.9401);transform-origin:0 50%;left:970.71px;">Balance Sh...</span>
<span class="t" style="top:401px;font-size:10.8px;transform:translateY(0px) scaleX(0.9373);transform-origin:0 50%;left:1040.90px;">Assets</span>
<span class="t" style="top:401px;font-size:10.8px;transform:translateY(0px) scaleX(1.0504);transform-origin:0 50%;left:1111.41px;">Debitoren</span>
<span class="t" style="top:401px;font-size:10.8px;letter-spacing:0.131px;left:1276.21px;">End-Total</span>
<span class="t" style="top:401px;font-size:10.8px;letter-spacing:-0.08px;left:1346.51px;">1200..1499</span>
<span class="t" style="top:427px;font-size:10.8px;color:#1f8a94;letter-spacing:0.0px;left:382.21px;">1610</span>
<span class="t" style="top:427px;font-size:10.8px;letter-spacing:-0.093px;left:494.41px;">Petty cash</span>
<span class="t" style="top:427px;font-size:10.8px;color:#1f8a94;left:813.77px;letter-spacing:-0.16px;">63,913.06</span>
<span class="t" style="top:427px;font-size:10.8px;color:#1f8a94;left:907.77px;letter-spacing:-0.16px;">63,913.06</span>
<span class="t" style="top:427px;font-size:10.8px;transform:translateY(0px) scaleX(0.9401);transform-origin:0 50%;left:970.71px;">Balance Sh...</span>
<span class="t" style="top:427px;font-size:10.8px;transform:translateY(0px) scaleX(0.9373);transform-origin:0 50%;left:1040.90px;">Assets</span>
<span class="t" style="top:427px;font-size:10.8px;letter-spacing:-0.268px;left:1111.41px;">Bar</span>
<span class="t" style="top:427px;font-size:10.8px;letter-spacing:0.093px;left:1276.21px;">Posting</span>
<span class="t" style="top:454px;font-size:10.8px;color:#1f8a94;letter-spacing:0.0px;left:382.21px;">1810</span>
<span class="t" style="top:454px;font-size:10.8px;letter-spacing:0.004px;left:494.41px;">Geschäftskonto, Betrieb, Inland</span>
<span class="t" style="top:454px;font-size:10.8px;color:#1f8a94;left:813.77px;letter-spacing:-0.16px;">17,824.53</span>
<span class="t" style="top:454px;font-size:10.8px;color:#1f8a94;left:907.77px;letter-spacing:-0.16px;">17,824.53</span>
<span class="t" style="top:454px;font-size:10.8px;transform:translateY(0px) scaleX(0.9401);transform-origin:0 50%;left:970.71px;">Balance Sh...</span>
<span class="t" style="top:454px;font-size:10.8px;transform:translateY(0px) scaleX(0.9373);transform-origin:0 50%;left:1040.90px;">Assets</span>
<span class="t" style="top:454px;font-size:10.8px;letter-spacing:-0.268px;left:1111.41px;">Bar</span>
<span class="t" style="top:454px;font-size:10.8px;letter-spacing:0.093px;left:1276.21px;">Posting</span>
<span class="t" style="top:481px;font-size:10.8px;color:#1f8a94;letter-spacing:0.0px;left:382.21px;">1820</span>
<span class="t" style="top:481px;font-size:10.8px;letter-spacing:-0.015px;left:494.41px;">Geschäftskonto, Betrieb, Ausland</span>
<span class="t" style="top:481px;font-size:10.8px;color:#1f8a94;left:810.34px;letter-spacing:-0.16px;">-17,924.53</span>
<span class="t" style="top:481px;font-size:10.8px;color:#1f8a94;left:904.34px;letter-spacing:-0.16px;">-17,924.53</span>
<span class="t" style="top:481px;font-size:10.8px;transform:translateY(0px) scaleX(0.9401);transform-origin:0 50%;left:970.71px;">Balance Sh...</span>
<span class="t" style="top:481px;font-size:10.8px;transform:translateY(0px) scaleX(0.9373);transform-origin:0 50%;left:1040.90px;">Assets</span>
<span class="t" style="top:481px;font-size:10.8px;letter-spacing:-0.268px;left:1111.41px;">Bar</span>
<span class="t" style="top:481px;font-size:10.8px;letter-spacing:0.093px;left:1276.21px;">Posting</span>
<span class="t" style="top:507px;font-size:10.8px;font-weight:700;color:#111;letter-spacing:0.33px;left:382.91px;">1899</span>
<span class="t" style="top:507px;font-size:10.8px;font-weight:700;color:#111;letter-spacing:-0.053px;left:486.41px;">Summe, Bargeld und Bank</span>
<span class="t" style="top:507px;font-size:10.8px;color:#1f8a94;left:813.77px;letter-spacing:-0.16px;">63,813.06</span>
<span class="t" style="top:507px;font-size:10.8px;color:#1f8a94;left:907.77px;letter-spacing:-0.16px;">63,813.06</span>
<span class="t" style="top:507px;font-size:10.8px;transform:translateY(0px) scaleX(0.9401);transform-origin:0 50%;left:970.71px;">Balance Sh...</span>
<span class="t" style="top:507px;font-size:10.8px;transform:translateY(0px) scaleX(0.9373);transform-origin:0 50%;left:1040.90px;">Assets</span>
<span class="t" style="top:507px;font-size:10.8px;letter-spacing:-0.268px;left:1111.41px;">Bar</span>
<span class="t" style="top:507px;font-size:10.8px;letter-spacing:0.131px;left:1276.21px;">End-Total</span>
<span class="t" style="top:507px;font-size:10.8px;letter-spacing:-0.08px;left:1346.51px;">1600..1899</span>
<span class="t" style="top:534px;font-size:10.8px;font-weight:700;color:#111;letter-spacing:0.33px;left:382.91px;">1999</span>
<span class="t" style="top:534px;font-size:10.8px;font-weight:700;color:#111;letter-spacing:0.013px;left:478.81px;">Aktiva gesamt</span>
<span class="t" style="top:534px;font-size:10.8px;color:#1f8a94;left:807.93px;letter-spacing:-0.16px;">383,063.97</span>
<span class="t" style="top:534px;font-size:10.8px;color:#1f8a94;left:901.93px;letter-spacing:-0.16px;">383,063.97</span>
<span class="t" style="top:534px;font-size:10.8px;transform:translateY(0px) scaleX(0.9401);transform-origin:0 50%;left:970.71px;">Balance Sh...</span>
<span class="t" style="top:534px;font-size:10.8px;transform:translateY(0px) scaleX(0.9373);transform-origin:0 50%;left:1040.90px;">Assets</span>
<span class="t" style="top:534px;font-size:10.8px;letter-spacing:0.161px;left:1111.01px;">Anlagen</span>
<span class="t" style="top:534px;font-size:10.8px;letter-spacing:0.131px;left:1276.21px;">End-Total</span>
<span class="t" style="top:534px;font-size:10.8px;letter-spacing:-0.08px;left:1346.51px;">00..1999</span>
<span class="t" style="top:561px;font-size:10.8px;color:#1f8a94;letter-spacing:0.0px;left:382.21px;">3301</span>
<span class="t" style="top:561px;font-size:10.8px;letter-spacing:0.078px;left:486.41px;">Liabilities, domestic</span>
<span class="t" style="top:561px;font-size:10.8px;color:#1f8a94;left:810.34px;letter-spacing:-0.16px;">-43,786.13</span>
<span class="t" style="top:561px;font-size:10.8px;color:#1f8a94;left:904.34px;letter-spacing:-0.16px;">-43,786.13</span>
<span class="t" style="top:561px;font-size:10.8px;transform:translateY(0px) scaleX(0.9401);transform-origin:0 50%;left:970.71px;">Balance Sh...</span>
<span class="t" style="top:561px;font-size:10.8px;letter-spacing:0.047px;left:1041.21px;">Liabilities</span>
<span class="t" style="top:561px;font-size:10.8px;letter-spacing:0.159px;left:1111.95px;">Verbindlichkeiten</span>
<span class="t" style="top:561px;font-size:10.8px;letter-spacing:0.093px;left:1276.21px;">Posting</span>
<span class="t" style="top:587px;font-size:10.8px;color:#1f8a94;letter-spacing:0.0px;left:382.21px;">3302</span>
<span class="t" style="top:587px;font-size:10.8px;letter-spacing:0.102px;left:486.41px;">Liabilities, foreign countries</span>
<span class="t" style="top:587px;font-size:10.8px;color:#1f8a94;left:810.34px;letter-spacing:-0.16px;">-93,584.20</span>
<span class="t" style="top:587px;font-size:10.8px;color:#1f8a94;left:904.34px;letter-spacing:-0.16px;">-93,584.20</span>
<span class="t" style="top:587px;font-size:10.8px;transform:translateY(0px) scaleX(0.9401);transform-origin:0 50%;left:970.71px;">Balance Sh...</span>
<span class="t" style="top:587px;font-size:10.8px;letter-spacing:0.047px;left:1041.21px;">Liabilities</span>
<span class="t" style="top:587px;font-size:10.8px;letter-spacing:0.159px;left:1111.95px;">Verbindlichkeiten</span>
<span class="t" style="top:587px;font-size:10.8px;letter-spacing:0.093px;left:1276.21px;">Posting</span>
<span class="t" style="top:614px;font-size:10.8px;color:#1f8a94;letter-spacing:0.0px;left:382.21px;">3800</span>
<span class="t" style="top:614px;font-size:10.8px;letter-spacing:0.082px;left:486.41px;">Sonstige MwSt.-Verbindlichkeiten</span>
<span class="t" style="top:614px;font-size:10.8px;color:#1f8a94;left:810.34px;letter-spacing:-0.16px;">-14,984.38</span>
<span class="t" style="top:614px;font-size:10.8px;color:#1f8a94;left:904.34px;letter-spacing:-0.16px;">-14,984.38</span>
<span class="t" style="top:614px;font-size:10.8px;transform:translateY(0px) scaleX(0.9401);transform-origin:0 50%;left:970.71px;">Balance Sh...</span>
<span class="t" style="top:614px;font-size:10.8px;letter-spacing:0.047px;left:1041.21px;">Liabilities</span>
<span class="t" style="top:614px;font-size:10.8px;letter-spacing:0.159px;left:1111.95px;">Verbindlichkeiten</span>
<span class="t" style="top:614px;font-size:10.8px;letter-spacing:0.093px;left:1276.21px;">Posting</span>
<span class="t" style="top:614px;font-size:10.8px;letter-spacing:0.157px;left:1591.01px;">INLAND</span>
<span class="t" style="top:614px;font-size:10.8px;transform:translateY(0px) scaleX(0.9171);transform-origin:0 50%;left:1670.81px;">SONST</span>
<span class="t" style="top:641px;font-size:10.8px;color:#1f8a94;letter-spacing:0.0px;left:382.21px;">3801</span>
<span class="t" style="top:641px;font-size:10.8px;letter-spacing:0.010px;left:486.95px;">Verkäufe zum reduzierten MwSt.-Satz</span>
<span class="t" style="top:641px;font-size:10.8px;color:#1f8a94;left:830.71px;letter-spacing:-0.16px;">-90.54</span>
<span class="t" style="top:641px;font-size:10.8px;color:#1f8a94;left:924.71px;letter-spacing:-0.16px;">-90.54</span>
<span class="t" style="top:641px;font-size:10.8px;transform:translateY(0px) scaleX(0.9401);transform-origin:0 50%;left:970.71px;">Balance Sh...</span>
<span class="t" style="top:641px;font-size:10.8px;letter-spacing:0.047px;left:1041.21px;">Liabilities</span>
<span class="t" style="top:641px;font-size:10.8px;letter-spacing:0.159px;left:1111.95px;">Verbindlichkeiten</span>
<span class="t" style="top:641px;font-size:10.8px;letter-spacing:0.093px;left:1276.21px;">Posting</span>
<span class="t" style="top:667px;font-size:10.8px;color:#1f8a94;letter-spacing:0.0px;left:382.21px;">3806</span>
<span class="t" style="top:667px;font-size:10.8px;letter-spacing:0.019px;left:486.95px;">Verkauf zum normalen MwSt.-Satz</span>
<span class="t" style="top:667px;font-size:10.8px;color:#1f8a94;left:810.34px;letter-spacing:-0.16px;">-82,008.02</span>
<span class="t" style="top:667px;font-size:10.8px;color:#1f8a94;left:904.34px;letter-spacing:-0.16px;">-82,008.02</span>
<span class="t" style="top:667px;font-size:10.8px;transform:translateY(0px) scaleX(0.9401);transform-origin:0 50%;left:970.71px;">Balance Sh...</span>
<span class="t" style="top:667px;font-size:10.8px;letter-spacing:0.047px;left:1041.21px;">Liabilities</span>
<span class="t" style="top:667px;font-size:10.8px;letter-spacing:0.159px;left:1111.95px;">Verbindlichkeiten</span>
<span class="t" style="top:667px;font-size:10.8px;letter-spacing:0.093px;left:1276.21px;">Posting</span>
<span class="t" style="top:694px;font-size:10.8px;font-weight:700;color:#111;letter-spacing:0.33px;left:382.91px;">3999</span>
<span class="t" style="top:694px;font-size:10.8px;font-weight:700;color:#111;letter-spacing:0.063px;left:478.81px;">Summe Verbindlichkeiten</span>
<span class="t" style="top:694px;font-size:10.8px;color:#1f8a94;left:804.50px;letter-spacing:-0.16px;">-234,453.27</span>
<span class="t" style="top:694px;font-size:10.8px;color:#1f8a94;left:898.50px;letter-spacing:-0.16px;">-234,453.27</span>
<span class="t" style="top:694px;font-size:10.8px;transform:translateY(0px) scaleX(0.9401);transform-origin:0 50%;left:970.71px;">Balance Sh...</span>
<span class="t" style="top:694px;font-size:10.8px;letter-spacing:0.047px;left:1041.21px;">Liabilities</span>
<span class="t" style="top:694px;font-size:10.8px;letter-spacing:0.159px;left:1111.95px;">Verbindlichkeiten</span>
<span class="t" style="top:694px;font-size:10.8px;letter-spacing:0.131px;left:1276.21px;">End-Total</span>
<span class="t" style="top:694px;font-size:10.8px;letter-spacing:-0.08px;left:1346.51px;">3..3999</span>
<span class="t" style="top:721px;font-size:10.8px;color:#1f8a94;letter-spacing:0.0px;left:382.21px;">4150</span>
<span class="t" style="top:721px;font-size:10.8px;letter-spacing:0.255px;left:486.41px;">Mitarbeiterzahlungen</span>
<span class="t" style="top:721px;font-size:10.8px;color:#1f8a94;left:828.31px;letter-spacing:-0.16px;">100.00</span>
<span class="t" style="top:721px;font-size:10.8px;color:#1f8a94;left:922.31px;letter-spacing:-0.16px;">100.00</span>
<span class="t" style="top:721px;font-size:10.8px;transform:translateY(0px) scaleX(0.9401);transform-origin:0 50%;left:970.71px;">Balance Sh...</span>
<span class="t" style="top:721px;font-size:10.8px;letter-spacing:0.047px;left:1041.21px;">Liabilities</span>
<span class="t" style="top:721px;font-size:10.8px;letter-spacing:0.093px;left:1276.21px;">Posting</span>
<span class="t" style="top:747px;font-size:10.8px;color:#1f8a94;letter-spacing:0.0px;left:382.21px;">4201</span>
<span class="t" style="top:747px;font-size:10.8px;letter-spacing:0.007px;left:486.41px;">Erträge aus Wertpapieren</span>
<span class="t" style="top:747px;font-size:10.8px;color:#1f8a94;left:813.77px;letter-spacing:-0.16px;">26,244.83</span>
<span class="t" style="top:747px;font-size:10.8px;color:#1f8a94;left:907.77px;letter-spacing:-0.16px;">26,244.83</span>
<span class="t" style="top:747px;font-size:10.8px;letter-spacing:-0.081px;left:970.71px;">Income Sta...</span>
<span class="t" style="top:747px;font-size:10.8px;letter-spacing:0.240px;left:1041.21px;">Income</span>
<span class="t" style="top:747px;font-size:10.8px;letter-spacing:0.008px;left:1111.41px;">Einnahmen</span>
<span class="t" style="top:747px;font-size:10.8px;letter-spacing:0.093px;left:1276.21px;">Posting</span>
<span class="t" style="top:747px;font-size:10.8px;transform:translateY(0px) scaleX(0.9430);transform-origin:0 50%;left:1520.97px;">Sale</span>
<span class="t" style="top:747px;font-size:10.8px;letter-spacing:0.157px;left:1591.01px;">INLAND</span>
<span class="t" style="top:747px;font-size:10.8px;transform:translateY(0px) scaleX(0.9171);transform-origin:0 50%;left:1670.81px;">SONST</span>
<span class="t" style="top:774px;font-size:10.8px;color:#1f8a94;letter-spacing:0.0px;left:382.21px;">4403</span>
<span class="t" style="top:774px;font-size:10.8px;letter-spacing:0.080px;left:494.97px;">Wiederverkauf von Waren</span>
<span class="t" style="top:774px;font-size:10.8px;color:#1f8a94;left:804.50px;letter-spacing:-0.16px;">-758,615.72</span>
<span class="t" style="top:774px;font-size:10.8px;color:#1f8a94;left:898.50px;letter-spacing:-0.16px;">-758,615.72</span>
<span class="t" style="top:774px;font-size:10.8px;letter-spacing:-0.081px;left:970.71px;">Income Sta...</span>
<span class="t" style="top:774px;font-size:10.8px;letter-spacing:0.240px;left:1041.21px;">Income</span>
<span class="t" style="top:774px;font-size:10.8px;letter-spacing:-0.002px;left:1111.41px;">Einnahmen, Produktverkäufe</span>
<span class="t" style="top:774px;font-size:10.8px;letter-spacing:0.093px;left:1276.21px;">Posting</span>
<span class="t" style="top:774px;font-size:10.8px;transform:translateY(0px) scaleX(0.9430);transform-origin:0 50%;left:1520.97px;">Sale</span>
<span class="t" style="top:774px;font-size:10.8px;letter-spacing:0.157px;left:1591.01px;">INLAND</span>
<span class="t" style="top:774px;font-size:10.8px;letter-spacing:-0.265px;left:1670.81px;">HANDEL</span>
<span class="t" style="top:801px;font-size:10.8px;font-weight:700;color:#111;letter-spacing:0.33px;left:382.91px;">4409</span>
<span class="t" style="top:801px;font-size:10.8px;font-weight:700;color:#111;letter-spacing:0.103px;left:486.41px;">Summe, Verkauf von Waren</span>
<span class="t" style="top:801px;font-size:10.8px;color:#1f8a94;left:804.50px;letter-spacing:-0.16px;">-758,615.72</span>
<span class="t" style="top:801px;font-size:10.8px;color:#1f8a94;left:898.50px;letter-spacing:-0.16px;">-758,615.72</span>
<span class="t" style="top:801px;font-size:10.8px;letter-spacing:-0.081px;left:970.71px;">Income Sta...</span>
<span class="t" style="top:801px;font-size:10.8px;letter-spacing:0.240px;left:1041.21px;">Income</span>
<span class="t" style="top:801px;font-size:10.8px;letter-spacing:-0.002px;left:1111.41px;">Einnahmen, Produktverkäufe</span>
<span class="t" style="top:801px;font-size:10.8px;letter-spacing:0.131px;left:1276.21px;">End-Total</span>
<span class="t" style="top:801px;font-size:10.8px;letter-spacing:-0.08px;left:1346.51px;">4400..4409</span>
<span class="t" style="top:827px;font-size:10.8px;color:#1f8a94;letter-spacing:0.0px;left:382.21px;">4418</span>
<span class="t" style="top:827px;font-size:10.8px;letter-spacing:-0.075px;left:494.41px;">Umsätze aus Servicearbeiten</span>
<span class="t" style="top:827px;font-size:10.8px;color:#1f8a94;left:816.19px;letter-spacing:-0.16px;">-1,500.00</span>
<span class="t" style="top:827px;font-size:10.8px;color:#1f8a94;left:910.19px;letter-spacing:-0.16px;">-1,500.00</span>
<span class="t" style="top:827px;font-size:10.8px;letter-spacing:-0.081px;left:970.71px;">Income Sta...</span>
<span class="t" style="top:827px;font-size:10.8px;letter-spacing:0.240px;left:1041.21px;">Income</span>
<span class="t" style="top:827px;font-size:10.8px;letter-spacing:0.008px;left:1111.41px;">Einnahmen</span>
<span class="t" style="top:827px;font-size:10.8px;letter-spacing:0.093px;left:1276.21px;">Posting</span>
<span class="t" style="top:827px;font-size:10.8px;transform:translateY(0px) scaleX(0.9430);transform-origin:0 50%;left:1520.97px;">Sale</span>
<span class="t" style="top:854px;font-size:10.8px;font-weight:700;color:#111;letter-spacing:0.33px;left:382.91px;">4419</span>
<span class="t" style="top:854px;font-size:10.8px;font-weight:700;color:#111;letter-spacing:0.037px;left:486.41px;">Summe, Projekte und Dienstleistungen</span>
<span class="t" style="top:854px;font-size:10.8px;color:#1f8a94;left:816.19px;letter-spacing:-0.16px;">-1,500.00</span>
<span class="t" style="top:854px;font-size:10.8px;color:#1f8a94;left:910.19px;letter-spacing:-0.16px;">-1,500.00</span>
<span class="t" style="top:854px;font-size:10.8px;letter-spacing:-0.081px;left:970.71px;">Income Sta...</span>
<span class="t" style="top:854px;font-size:10.8px;letter-spacing:0.240px;left:1041.21px;">Income</span>
<span class="t" style="top:854px;font-size:10.8px;letter-spacing:0.008px;left:1111.41px;">Einnahmen</span>
<span class="t" style="top:854px;font-size:10.8px;letter-spacing:0.131px;left:1276.21px;">End-Total</span>
<span class="t" style="top:854px;font-size:10.8px;letter-spacing:-0.08px;left:1346.51px;">4414..4419</span>
<span class="t" style="top:881px;font-size:10.8px;color:#1f8a94;letter-spacing:0.0px;left:382.21px;">4730</span>
<span class="t" style="top:881px;font-size:10.8px;letter-spacing:0.015px;left:494.95px;">Verkaufsrabatte</span>
<span class="t" style="top:881px;font-size:10.8px;color:#1f8a94;left:819.63px;letter-spacing:-0.16px;">1,847.76</span>
<span class="t" style="top:881px;font-size:10.8px;color:#1f8a94;left:913.63px;letter-spacing:-0.16px;">1,847.76</span>
<span class="t" style="top:881px;font-size:10.8px;letter-spacing:-0.081px;left:970.71px;">Income Sta...</span>
<span class="t" style="top:881px;font-size:10.8px;letter-spacing:0.240px;left:1041.21px;">Income</span>
<span class="t" style="top:881px;font-size:10.8px;letter-spacing:0.008px;left:1111.41px;">Einnahmen</span>
<span class="t" style="top:881px;font-size:10.8px;letter-spacing:0.093px;left:1276.21px;">Posting</span>
<span class="t" style="top:881px;font-size:10.8px;transform:translateY(0px) scaleX(0.9430);transform-origin:0 50%;left:1520.97px;">Sale</span>
<span class="t" style="top:907px;font-size:10.8px;font-weight:700;color:#111;letter-spacing:0.33px;left:382.91px;">4799</span>
<span class="t" style="top:907px;font-size:10.8px;font-weight:700;color:#111;letter-spacing:-0.123px;left:486.41px;">Summe, Erlösschmälerungen</span>
<span class="t" style="top:907px;font-size:10.8px;color:#1f8a94;left:819.63px;letter-spacing:-0.16px;">1,847.76</span>
<span class="t" style="top:907px;font-size:10.8px;color:#1f8a94;left:913.63px;letter-spacing:-0.16px;">1,847.76</span>
<span class="t" style="top:907px;font-size:10.8px;letter-spacing:-0.081px;left:970.71px;">Income Sta...</span>
<span class="t" style="top:907px;font-size:10.8px;letter-spacing:0.240px;left:1041.21px;">Income</span>
<span class="t" style="top:907px;font-size:10.8px;letter-spacing:0.008px;left:1111.41px;">Einnahmen</span>
<span class="t" style="top:907px;font-size:10.8px;letter-spacing:0.131px;left:1276.21px;">End-Total</span>
<span class="t" style="top:907px;font-size:10.8px;letter-spacing:-0.08px;left:1346.51px;">4700..4799</span>
<span class="t" style="top:934px;font-size:10.8px;font-weight:700;color:#111;letter-spacing:0.33px;left:382.91px;">4999</span>
<span class="t" style="top:934px;font-size:10.8px;font-weight:700;color:#111;letter-spacing:0.064px;left:478.81px;">GESAMTEINNAHMEN</span>
<span class="t" style="top:934px;font-size:10.8px;color:#1f8a94;left:804.50px;letter-spacing:-0.16px;">-731,923.13</span>
<span class="t" style="top:934px;font-size:10.8px;color:#1f8a94;left:898.50px;letter-spacing:-0.16px;">-731,923.13</span>
<span class="t" style="top:934px;font-size:10.8px;letter-spacing:-0.081px;left:970.71px;">Income Sta...</span>
<span class="t" style="top:934px;font-size:10.8px;letter-spacing:0.240px;left:1041.21px;">Income</span>
<span class="t" style="top:934px;font-size:10.8px;letter-spacing:0.008px;left:1111.41px;">Einnahmen</span>
<span class="t" style="top:934px;font-size:10.8px;letter-spacing:0.131px;left:1276.21px;">End-Total</span>
<span class="t" style="top:934px;font-size:10.8px;letter-spacing:-0.08px;left:1346.51px;">4000..4999</span>
<span class="t" style="top:961px;font-size:10.8px;color:#1f8a94;letter-spacing:0.0px;left:382.21px;">5021</span>
<span class="t" style="top:961px;font-size:10.8px;letter-spacing:0.168px;left:494.41px;">Materialaufwand</span>
<span class="t" style="top:961px;font-size:10.8px;color:#1f8a94;left:807.93px;letter-spacing:-0.16px;">568,374.46</span>
<span class="t" style="top:961px;font-size:10.8px;color:#1f8a94;left:901.93px;letter-spacing:-0.16px;">568,374.46</span>
<span class="t" style="top:961px;font-size:10.8px;letter-spacing:-0.081px;left:970.71px;">Income Sta...</span>
<span class="t" style="top:961px;font-size:10.8px;letter-spacing:-0.002px;left:1041.01px;">Cost of Go...</span>
<span class="t" style="top:961px;font-size:10.8px;letter-spacing:0.198px;left:1111.41px;">Materialien</span>
<span class="t" style="top:961px;font-size:10.8px;letter-spacing:0.109px;left:1276.21px;">Posting</span>
<div style="position:absolute;left:370px;top:973.4px;width:1490px;height:28.6px;background:#f5f6f8;"></div>
<div style="position:absolute;left:377px;top:974.1px;width:1473px;height:11.9px;background:#fafafb;"></div>
<div style="position:absolute;left:394.8px;top:977.0px;width:1265.4px;height:6.8px;background:#8b8b8b;border-radius:3.4px;"></div>
<svg style="position:absolute;left:0px;top:0px;" width="1" height="1" viewBox="0 0 1 1"><path d="M389 977v7l-5.800-3.500z" fill="#868686"/><path d="M1837.800 977v7l5.500-3.500z" fill="#868686"/></svg>
<div style="position:absolute;left:1838px;top:182.4px;width:12.6px;height:791.8px;background:#fafafb;"></div>
<svg style="position:absolute;left:0px;top:0px;" width="1" height="1" viewBox="0 0 1 1"><rect x="1840.200" y="201.400" width="6.800" height="569.400" rx="3.400" fill="#8b8b8b"/><path d="M1840 195h7.200l-3.600-5.400z" fill="#868686"/><path d="M1840 961.300h7.200l-3.600 5.500z" fill="#868686"/></svg>
</body></html>
